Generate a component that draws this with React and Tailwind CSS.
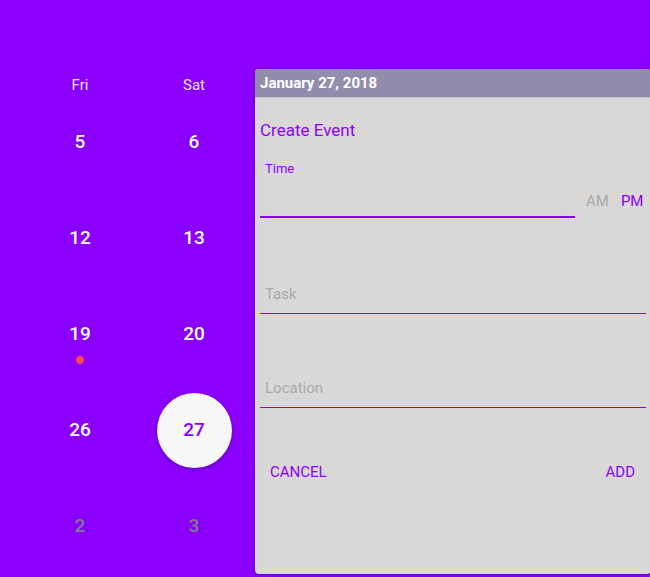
import React from "react";

// Calendar rows: only the Fri / Sat columns are visible
const WEEKS = [
  [{ d: "5" }, { d: "6" }],
  [{ d: "12" }, { d: "13" }],
  [{ d: "19", dot: true }, { d: "20" }],
  [{ d: "26" }, { d: "27", selected: true }],
  [{ d: "2", muted: true }, { d: "3", muted: true }],
];

const DayCell = ({ day }) => (
  <div className="relative flex h-[96px] w-[114px] items-center justify-center">
    {day.selected && (
      <div className="absolute h-[75px] w-[75px] rounded-full bg-[#f7f7f7] shadow-[0_2px_4px_rgba(0,0,0,0.25)]" />
    )}
    <span
      className={`relative text-[19px] font-medium ${
        day.selected ? "text-[#8a00fc]" : day.muted ? "text-[#7f7f86]" : "text-white"
      }`}
    >
      {day.d}
    </span>
    {day.dot && (
      <span className="absolute top-[70px] h-[8px] w-[8px] rounded-full bg-[#ff4b4b]" />
    )}
  </div>
);

const Calendar = () => (
  <div className="pl-[23px] pt-[74px]">
    <div className="flex h-[20px] text-[15px] text-[#ece0ff]">
      <div className="w-[114px] text-center">Fri</div>
      <div className="w-[114px] text-center">Sat</div>
    </div>
    <div>
      {WEEKS.map((week, i) => (
        <div key={i} className="flex">
          {week.map((day) => (
            <DayCell key={day.d} day={day} />
          ))}
        </div>
      ))}
    </div>
  </div>
);

const Field = ({ placeholder, className = "" }) => (
  <div className={className}>
    <div className="pb-[8px] pl-[5px] text-[15px] leading-[22px] text-[#a9a8a8]">
      {placeholder}
    </div>
    <div className="h-[1px] bg-[#8a00fc]" />
  </div>
);

const EventPanel = () => (
  <div className="mt-[69px] flex h-[505px] w-[396px] flex-col overflow-hidden rounded-[4px] bg-[#d9d8d7] shadow-[0_1px_3px_rgba(0,0,0,0.3)]">
    <div className="flex h-[29px] items-center border-b border-[#c8c6cc] bg-[#928dad] pl-[5px] text-[15px] font-bold text-white">
      January 27, 2018
    </div>
    <div className="pl-[5px] pr-[5px]">
      <div className="mt-[20px] text-[17px] leading-[24px] text-[#8a00fc]">Create Event</div>
      <div className="mt-[17px] pl-[5px] text-[13px] leading-[20px] text-[#8a00fc]">Time</div>
      <div className="flex items-end">
        <div className="w-[315px]">
          <div className="h-[37px]" />
          <div className="h-[2px] bg-[#8a00fc]" />
        </div>
        <div className="mb-[6px] ml-[11px] flex gap-[12px] text-[15px] leading-[22px]">
          <span className="text-[#a9a8a8]">AM</span>
          <span className="text-[#8a00fc]">PM</span>
        </div>
      </div>
      <Field placeholder="Task" className="mt-[65px]" />
      <Field placeholder="Location" className="mt-[63px]" />
      <div className="mt-[53px] flex justify-between pl-[10px] pr-[11px] text-[15px] leading-[22px] text-[#8a00fc]">
        <span>CANCEL</span>
        <span>ADD</span>
      </div>
    </div>
  </div>
);

const App = () => (
  <div
    className="flex h-[577px] w-[650px] overflow-hidden bg-[#8a00fc]"
    style={{ fontFamily: "Roboto, 'Noto Sans', sans-serif" }}
  >
    <Calendar />
    <div className="ml-[4px]">
      <EventPanel />
    </div>
  </div>
);

export default App;
